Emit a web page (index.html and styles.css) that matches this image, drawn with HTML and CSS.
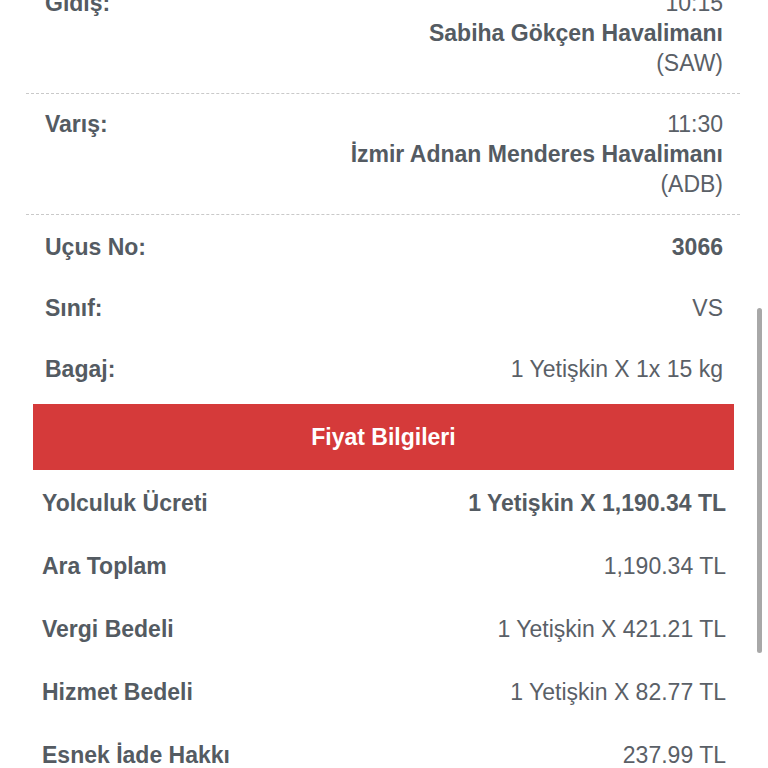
FILE: index.html
```html
<!DOCTYPE html>
<html lang="tr">
<head>
<meta charset="utf-8">
<title>Uçuş Detayı</title>
<link rel="stylesheet" href="styles.css">
</head>
<body>
<div class="page">
  <section class="flight">
    <div class="leg first">
      <div class="leg-label">Gidiş:</div>
      <div class="leg-info">
        <div>10:15</div>
        <div class="airport">Sabiha Gökçen Havalimanı</div>
        <div>(SAW)</div>
      </div>
    </div>
    <div class="leg">
      <div class="leg-label">Varış:</div>
      <div class="leg-info">
        <div>11:30</div>
        <div class="airport">İzmir Adnan Menderes Havalimanı</div>
        <div>(ADB)</div>
      </div>
    </div>
    <div class="info-list">
      <div class="info-row"><span class="label">Uçus No:</span><span class="value strong">3066</span></div>
      <div class="info-row"><span class="label">Sınıf:</span><span class="value">VS</span></div>
      <div class="info-row"><span class="label">Bagaj:</span><span class="value">1 Yetişkin X 1x 15 kg</span></div>
    </div>
  </section>
  <section class="price">
    <div class="price-head">Fiyat Bilgileri</div>
    <div class="price-list">
      <div class="price-row"><span class="label">Yolculuk Ücreti</span><span class="value strong">1 Yetişkin X 1,190.34 TL</span></div>
      <div class="price-row"><span class="label">Ara Toplam</span><span class="value">1,190.34 TL</span></div>
      <div class="price-row"><span class="label">Vergi Bedeli</span><span class="value">1 Yetişkin X 421.21 TL</span></div>
      <div class="price-row"><span class="label">Hizmet Bedeli</span><span class="value">1 Yetişkin X 82.77 TL</span></div>
      <div class="price-row"><span class="label">Esnek İade Hakkı</span><span class="value">237.99 TL</span></div>
    </div>
  </section>
</div>
<div class="scrollbar"></div>
</body>
</html>
```
FILE: styles.css
```css
html, body {
  margin: 0;
  padding: 0;
  background: #ffffff;
  overflow: hidden;
}
body {
  font-family: "Liberation Sans", Arial, sans-serif;
  font-size: 23px;
  color: #5a6067;
  width: 768px;
  height: 768px;
}
.page {
  display: flex;
  flex-direction: column;
}
.flight {
  margin: 0 28px 0 26px;
  display: flex;
  flex-direction: column;
}
.leg {
  display: flex;
  justify-content: space-between;
  padding: 15px 17px 15px 19px;
  border-bottom: 1px dashed #c9c9c9;
  line-height: 30px;
}
.leg.first {
  margin-top: -27px;
}
.leg-label {
  font-weight: bold;
  color: #545b62;
}
.leg-info {
  text-align: right;
}
.airport {
  font-weight: bold;
  color: #545b62;
}
.info-list {
  padding-top: 2px;
  display: flex;
  flex-direction: column;
}
.info-row {
  height: 61px;
  display: flex;
  align-items: center;
  justify-content: space-between;
  padding: 0 17px 0 19px;
}
.label {
  font-weight: bold;
  color: #545b62;
}
.strong {
  font-weight: bold;
  color: #545b62;
}
.price {
  margin: 4px 34px 0 33px;
  display: flex;
  flex-direction: column;
}
.price-head {
  height: 66px;
  background: #d53a3a;
  color: #ffffff;
  font-weight: bold;
  display: flex;
  align-items: center;
  justify-content: center;
}
.price-list {
  padding-top: 2px;
  display: flex;
  flex-direction: column;
}
.price-row {
  height: 63px;
  display: flex;
  align-items: center;
  justify-content: space-between;
  padding: 0 8px 0 9px;
}
.scrollbar {
  position: fixed;
  right: 6px;
  top: 308px;
  width: 5px;
  height: 345px;
  border-radius: 3px;
  background: #a8a8a8;
}
```
